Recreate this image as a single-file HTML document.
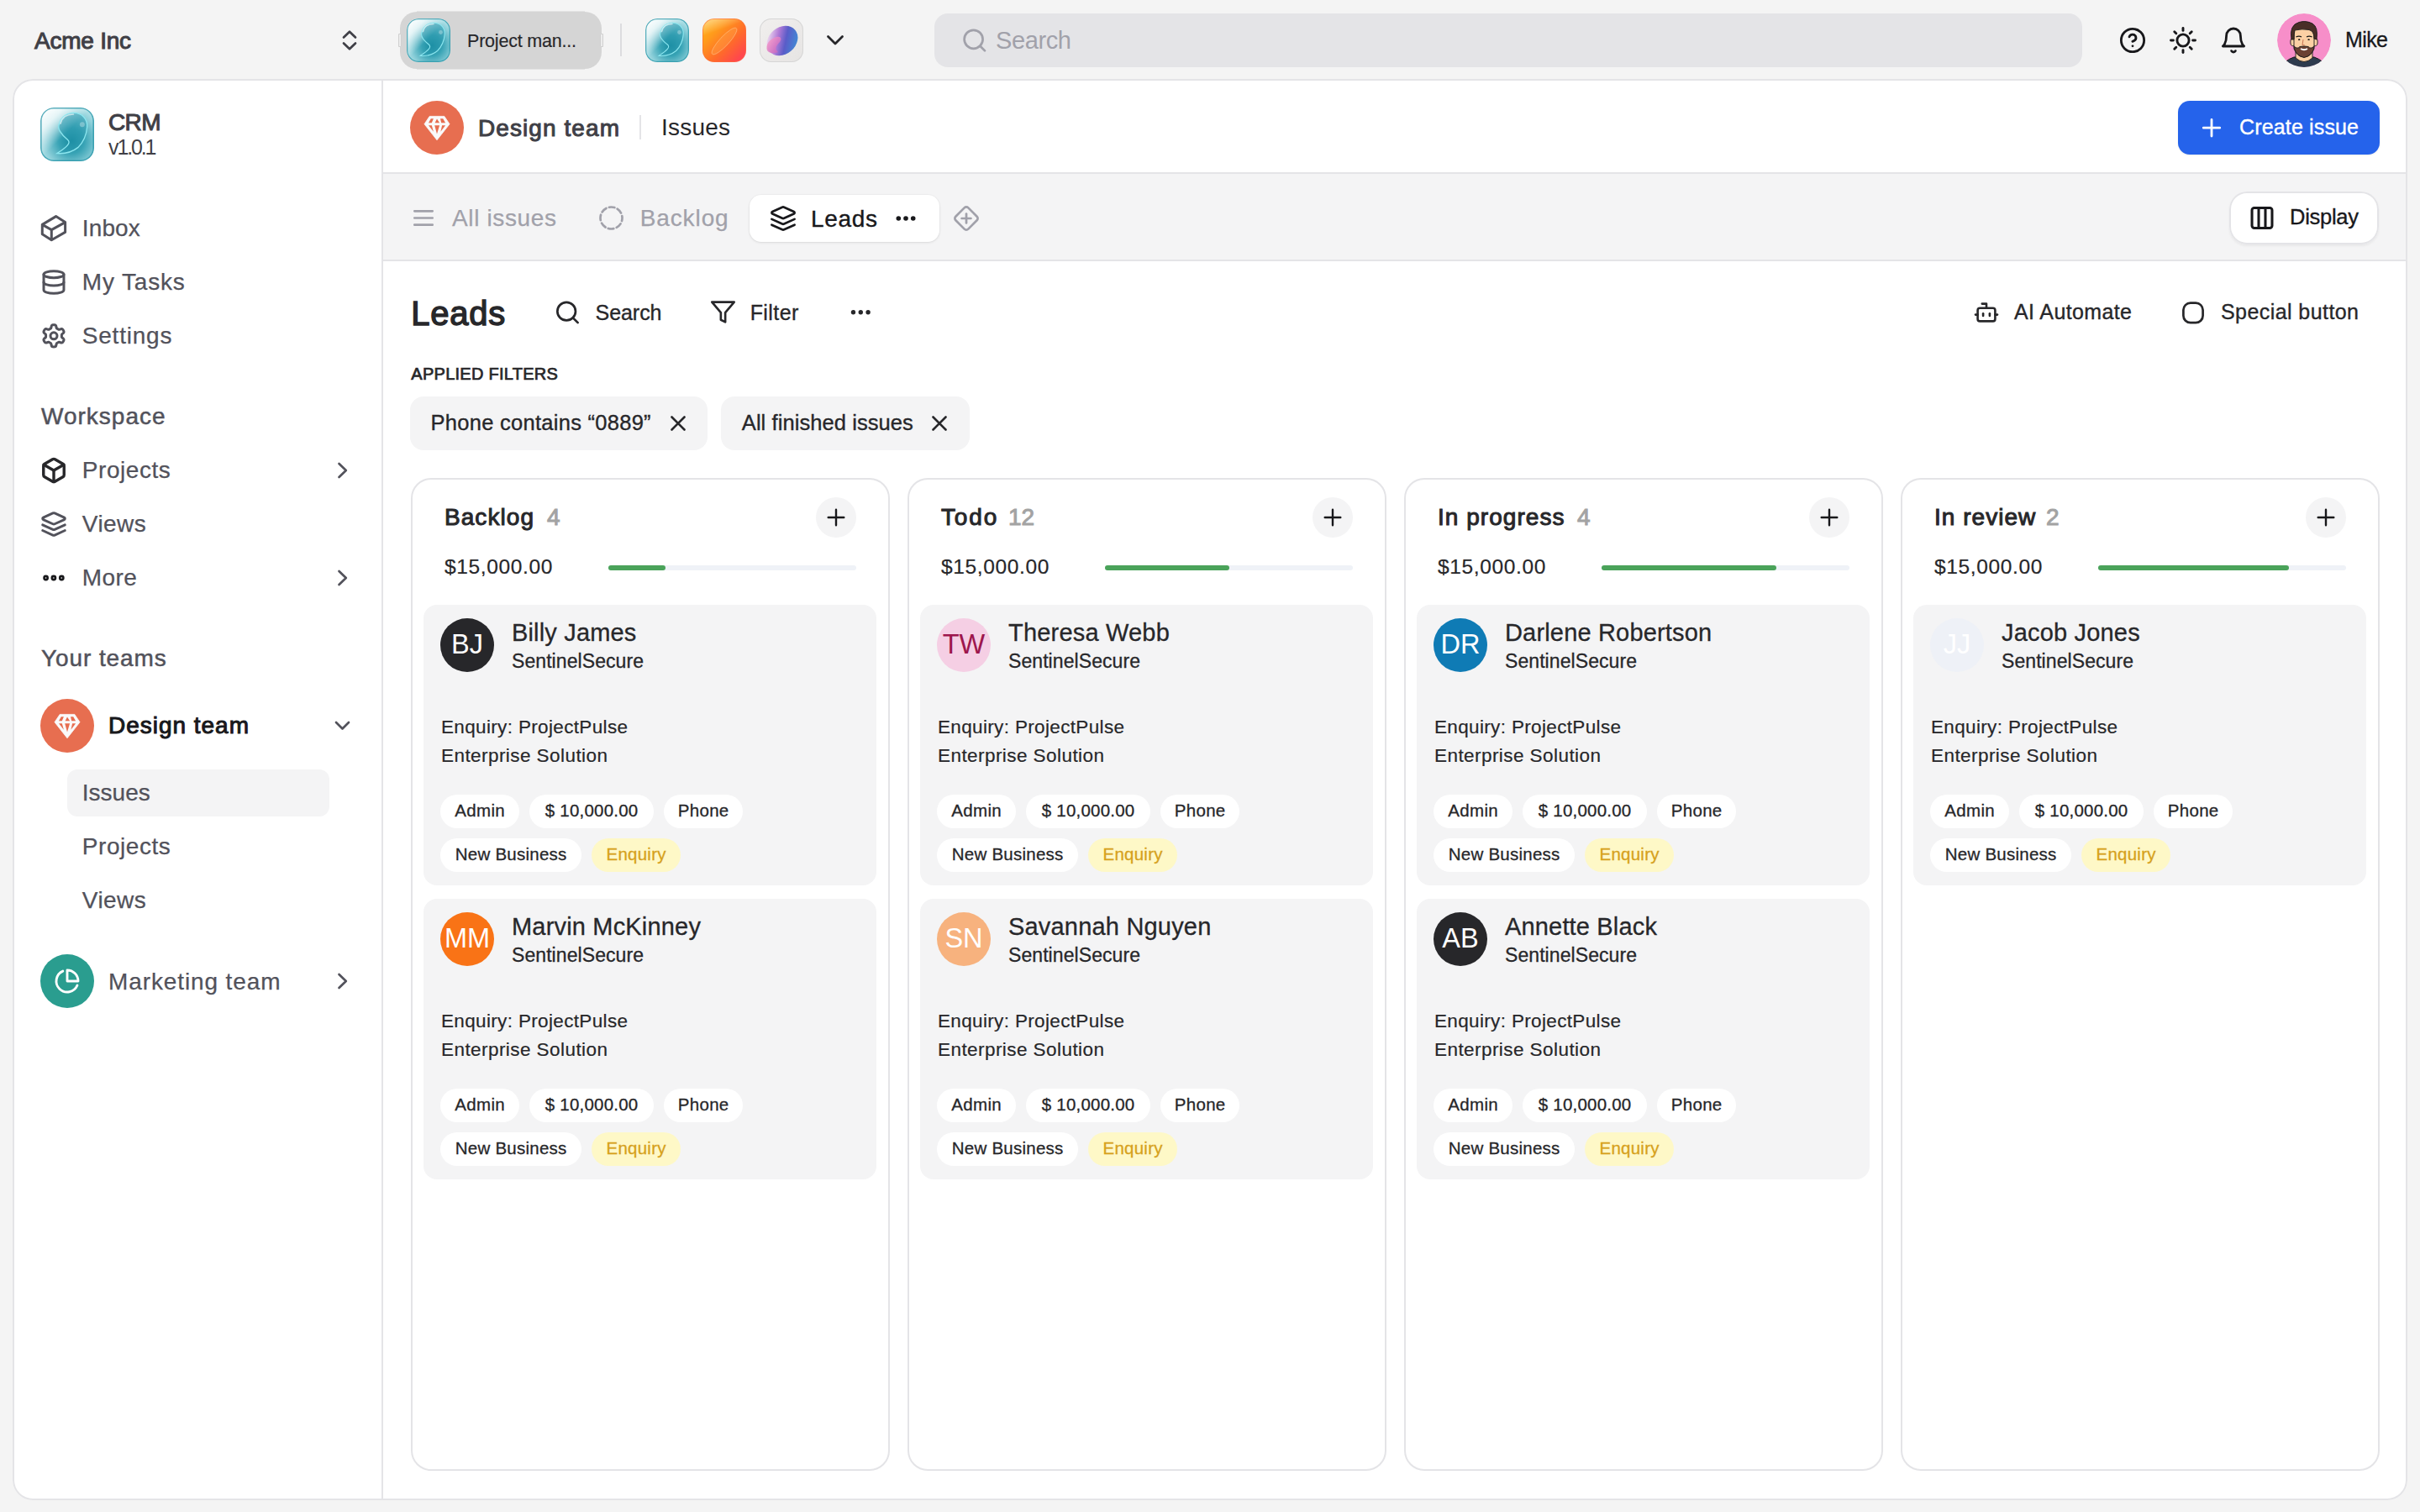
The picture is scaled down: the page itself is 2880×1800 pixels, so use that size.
<!DOCTYPE html>
<html><head><meta charset="utf-8"><title>Leads</title>
<style>
html,body{margin:0;padding:0;}
body{width:2880px;height:1800px;overflow:hidden;position:relative;background:#f4f4f4;font-family:"Liberation Sans", sans-serif;}
.a{position:absolute;box-sizing:border-box;}
.t{position:absolute;white-space:nowrap;font-family:"Liberation Sans", sans-serif;}
svg.ov{position:absolute;left:0;top:0;}
</style></head><body>
<div class="a" style="left:496px;top:13px;width:200px;height:70px;background:#e3e3e3;"></div>
<div class="a" style="left:476px;top:14px;width:240px;height:68px;background:#d5d5d5;border-radius:20px;"></div>
<div class="a" style="left:474px;top:40px;width:4px;height:16px;background:#ececec;border-radius:1px;box-shadow:inset 0 0 0 1px #d0d0d0;"></div>
<div class="a" style="left:714px;top:40px;width:4px;height:16px;background:#ececec;border-radius:1px;box-shadow:inset 0 0 0 1px #d0d0d0;"></div>
<div class="a" style="left:484px;top:22px;width:52px;height:52px;border-radius:14px;background:linear-gradient(135deg, rgba(255,255,255,0.95) 0%, rgba(255,255,255,0.75) 22%, rgba(255,255,255,0) 48%),radial-gradient(circle at 58% 62%, #168a9f 0%, #38a3b5 28%, #8ccfd9 58%, #c9ecf0 85%, #e6f7f9 100%);box-shadow:inset 0 0 0 1.3px rgba(40,150,168,0.75);"></div>
<div class="a" style="left:738px;top:28px;width:2px;height:39px;background:#dcdcdf;"></div>
<div class="a" style="left:768px;top:22px;width:52px;height:52px;border-radius:14px;background:linear-gradient(135deg, rgba(255,255,255,0.95) 0%, rgba(255,255,255,0.75) 22%, rgba(255,255,255,0) 48%),radial-gradient(circle at 58% 62%, #168a9f 0%, #38a3b5 28%, #8ccfd9 58%, #c9ecf0 85%, #e6f7f9 100%);box-shadow:inset 0 0 0 1.3px rgba(40,150,168,0.75);"></div>
<div class="a" style="left:836px;top:22px;width:52px;height:52px;border-radius:14px;background:linear-gradient(160deg, rgba(255,255,255,0.55) 0%, rgba(255,255,255,0) 30%),linear-gradient(135deg, #ffb915 0%, #ff9a1c 30%, #ff6b2a 60%, #ff4a4a 85%, #ff3d63 100%);box-shadow:inset 0 0 0 1px rgba(255,110,60,0.6);"></div>
<div class="a" style="left:904px;top:22px;width:52px;height:52px;border-radius:14px;background:linear-gradient(135deg,#f1efee 0%,#e6e4e3 100%);box-shadow:inset 0 0 0 1px #d6d6d6;"></div>
<div class="a" style="left:1112px;top:16px;width:1366px;height:64px;background:#e4e4e7;border-radius:16px;"></div>
<div class="a" style="left:15px;top:94px;width:2850px;height:1692px;background:#ffffff;border-radius:24px;box-shadow:inset 0 0 0 2px #e4e4e7;"></div>
<div class="a" style="left:454px;top:94px;width:2px;height:1692px;background:#e4e4e7;"></div>
<div class="a" style="left:48px;top:128px;width:64px;height:64px;border-radius:16px;background:linear-gradient(135deg, rgba(255,255,255,0.95) 0%, rgba(255,255,255,0.75) 22%, rgba(255,255,255,0) 48%),radial-gradient(circle at 58% 62%, #168a9f 0%, #38a3b5 28%, #8ccfd9 58%, #c9ecf0 85%, #e6f7f9 100%);box-shadow:inset 0 0 0 1.6px rgba(40,150,168,0.75);"></div>
<div class="a" style="left:48px;top:832px;width:64px;height:64px;background:#e76e50;border-radius:32px;"></div>
<div class="a" style="left:80px;top:916px;width:312px;height:56px;background:#f4f4f5;border-radius:12px;"></div>
<div class="a" style="left:48px;top:1136px;width:64px;height:64px;background:#2a9d8f;border-radius:32px;"></div>
<div class="a" style="left:488px;top:120px;width:64px;height:64px;background:#e76e50;border-radius:32px;"></div>
<div class="a" style="left:761px;top:137px;width:2px;height:29px;background:#e4e4e7;"></div>
<div class="a" style="left:2592px;top:120px;width:240px;height:64px;background:#2563eb;border-radius:14px;box-shadow:0 1px 2px rgba(0,0,0,0.08);"></div>
<div class="a" style="left:456px;top:205px;width:2407px;height:2px;background:#e4e4e7;"></div>
<div class="a" style="left:456px;top:207px;width:2407px;height:102px;background:#f4f4f5;"></div>
<div class="a" style="left:456px;top:309px;width:2407px;height:2px;background:#e4e4e7;"></div>
<div class="a" style="left:892px;top:232px;width:226px;height:56px;background:#ffffff;border-radius:14px;box-shadow:0 1px 3px rgba(0,0,0,0.10), 0 0 0 1px rgba(0,0,0,0.02);"></div>
<div class="a" style="left:2653px;top:228px;width:178px;height:63px;background:#ffffff;border-radius:21px;box-shadow:inset 0 0 0 2px #e4e4e7,0 2px 3px rgba(0,0,0,0.05);"></div>
<div class="a" style="left:488px;top:472px;width:354px;height:64px;background:#f4f4f5;border-radius:16px;"></div>
<div class="a" style="left:858px;top:472px;width:296px;height:64px;background:#f4f4f5;border-radius:16px;"></div>
<div class="a" style="left:489px;top:569px;width:570px;height:1182px;background:#ffffff;border-radius:24px;box-shadow:inset 0 0 0 2px #e4e4e7;"></div>
<div class="a" style="left:971px;top:592px;width:48px;height:48px;background:#f4f4f5;border-radius:24px;"></div>
<div class="a" style="left:724px;top:673px;width:295px;height:6px;background:#eff2f7;border-radius:3px;"></div>
<div class="a" style="left:724px;top:673px;width:68px;height:6px;background:#4aa35a;border-radius:3px;"></div>
<div class="a" style="left:504px;top:720px;width:539px;height:334px;background:#f4f4f5;border-radius:16px;"></div>
<div class="a" style="left:524px;top:736px;width:64px;height:64px;background:#27272a;border-radius:32px;"></div>
<div class="a" style="left:524px;top:946px;width:94px;height:40px;background:#ffffff;border-radius:20px;"></div>
<div class="a" style="left:630px;top:946px;width:148px;height:40px;background:#ffffff;border-radius:20px;"></div>
<div class="a" style="left:790px;top:946px;width:94px;height:40px;background:#ffffff;border-radius:20px;"></div>
<div class="a" style="left:524px;top:998px;width:168px;height:40px;background:#ffffff;border-radius:20px;"></div>
<div class="a" style="left:704px;top:998px;width:106px;height:40px;background:#fef8c7;border-radius:20px;"></div>
<div class="a" style="left:504px;top:1070px;width:539px;height:334px;background:#f4f4f5;border-radius:16px;"></div>
<div class="a" style="left:524px;top:1086px;width:64px;height:64px;background:#f97316;border-radius:32px;"></div>
<div class="a" style="left:524px;top:1296px;width:94px;height:40px;background:#ffffff;border-radius:20px;"></div>
<div class="a" style="left:630px;top:1296px;width:148px;height:40px;background:#ffffff;border-radius:20px;"></div>
<div class="a" style="left:790px;top:1296px;width:94px;height:40px;background:#ffffff;border-radius:20px;"></div>
<div class="a" style="left:524px;top:1348px;width:168px;height:40px;background:#ffffff;border-radius:20px;"></div>
<div class="a" style="left:704px;top:1348px;width:106px;height:40px;background:#fef8c7;border-radius:20px;"></div>
<div class="a" style="left:1080px;top:569px;width:570px;height:1182px;background:#ffffff;border-radius:24px;box-shadow:inset 0 0 0 2px #e4e4e7;"></div>
<div class="a" style="left:1562px;top:592px;width:48px;height:48px;background:#f4f4f5;border-radius:24px;"></div>
<div class="a" style="left:1315px;top:673px;width:295px;height:6px;background:#eff2f7;border-radius:3px;"></div>
<div class="a" style="left:1315px;top:673px;width:148px;height:6px;background:#4aa35a;border-radius:3px;"></div>
<div class="a" style="left:1095px;top:720px;width:539px;height:334px;background:#f4f4f5;border-radius:16px;"></div>
<div class="a" style="left:1115px;top:736px;width:64px;height:64px;background:#f5cfe4;border-radius:32px;"></div>
<div class="a" style="left:1115px;top:946px;width:94px;height:40px;background:#ffffff;border-radius:20px;"></div>
<div class="a" style="left:1221px;top:946px;width:148px;height:40px;background:#ffffff;border-radius:20px;"></div>
<div class="a" style="left:1381px;top:946px;width:94px;height:40px;background:#ffffff;border-radius:20px;"></div>
<div class="a" style="left:1115px;top:998px;width:168px;height:40px;background:#ffffff;border-radius:20px;"></div>
<div class="a" style="left:1295px;top:998px;width:106px;height:40px;background:#fef8c7;border-radius:20px;"></div>
<div class="a" style="left:1095px;top:1070px;width:539px;height:334px;background:#f4f4f5;border-radius:16px;"></div>
<div class="a" style="left:1115px;top:1086px;width:64px;height:64px;background:#f7b27e;border-radius:32px;"></div>
<div class="a" style="left:1115px;top:1296px;width:94px;height:40px;background:#ffffff;border-radius:20px;"></div>
<div class="a" style="left:1221px;top:1296px;width:148px;height:40px;background:#ffffff;border-radius:20px;"></div>
<div class="a" style="left:1381px;top:1296px;width:94px;height:40px;background:#ffffff;border-radius:20px;"></div>
<div class="a" style="left:1115px;top:1348px;width:168px;height:40px;background:#ffffff;border-radius:20px;"></div>
<div class="a" style="left:1295px;top:1348px;width:106px;height:40px;background:#fef8c7;border-radius:20px;"></div>
<div class="a" style="left:1671px;top:569px;width:570px;height:1182px;background:#ffffff;border-radius:24px;box-shadow:inset 0 0 0 2px #e4e4e7;"></div>
<div class="a" style="left:2153px;top:592px;width:48px;height:48px;background:#f4f4f5;border-radius:24px;"></div>
<div class="a" style="left:1906px;top:673px;width:295px;height:6px;background:#eff2f7;border-radius:3px;"></div>
<div class="a" style="left:1906px;top:673px;width:208px;height:6px;background:#4aa35a;border-radius:3px;"></div>
<div class="a" style="left:1686px;top:720px;width:539px;height:334px;background:#f4f4f5;border-radius:16px;"></div>
<div class="a" style="left:1706px;top:736px;width:64px;height:64px;background:#0f7bb5;border-radius:32px;"></div>
<div class="a" style="left:1706px;top:946px;width:94px;height:40px;background:#ffffff;border-radius:20px;"></div>
<div class="a" style="left:1812px;top:946px;width:148px;height:40px;background:#ffffff;border-radius:20px;"></div>
<div class="a" style="left:1972px;top:946px;width:94px;height:40px;background:#ffffff;border-radius:20px;"></div>
<div class="a" style="left:1706px;top:998px;width:168px;height:40px;background:#ffffff;border-radius:20px;"></div>
<div class="a" style="left:1886px;top:998px;width:106px;height:40px;background:#fef8c7;border-radius:20px;"></div>
<div class="a" style="left:1686px;top:1070px;width:539px;height:334px;background:#f4f4f5;border-radius:16px;"></div>
<div class="a" style="left:1706px;top:1086px;width:64px;height:64px;background:#27272a;border-radius:32px;"></div>
<div class="a" style="left:1706px;top:1296px;width:94px;height:40px;background:#ffffff;border-radius:20px;"></div>
<div class="a" style="left:1812px;top:1296px;width:148px;height:40px;background:#ffffff;border-radius:20px;"></div>
<div class="a" style="left:1972px;top:1296px;width:94px;height:40px;background:#ffffff;border-radius:20px;"></div>
<div class="a" style="left:1706px;top:1348px;width:168px;height:40px;background:#ffffff;border-radius:20px;"></div>
<div class="a" style="left:1886px;top:1348px;width:106px;height:40px;background:#fef8c7;border-radius:20px;"></div>
<div class="a" style="left:2262px;top:569px;width:570px;height:1182px;background:#ffffff;border-radius:24px;box-shadow:inset 0 0 0 2px #e4e4e7;"></div>
<div class="a" style="left:2744px;top:592px;width:48px;height:48px;background:#f4f4f5;border-radius:24px;"></div>
<div class="a" style="left:2497px;top:673px;width:295px;height:6px;background:#eff2f7;border-radius:3px;"></div>
<div class="a" style="left:2497px;top:673px;width:227px;height:6px;background:#4aa35a;border-radius:3px;"></div>
<div class="a" style="left:2277px;top:720px;width:539px;height:334px;background:#f4f4f5;border-radius:16px;"></div>
<div class="a" style="left:2297px;top:736px;width:64px;height:64px;background:#eef1f7;border-radius:32px;"></div>
<div class="a" style="left:2297px;top:946px;width:94px;height:40px;background:#ffffff;border-radius:20px;"></div>
<div class="a" style="left:2403px;top:946px;width:148px;height:40px;background:#ffffff;border-radius:20px;"></div>
<div class="a" style="left:2563px;top:946px;width:94px;height:40px;background:#ffffff;border-radius:20px;"></div>
<div class="a" style="left:2297px;top:998px;width:168px;height:40px;background:#ffffff;border-radius:20px;"></div>
<div class="a" style="left:2477px;top:998px;width:106px;height:40px;background:#fef8c7;border-radius:20px;"></div>
<span class="t" style="left:41.00px;top:34.80px;font-size:28px;line-height:28px;color:#3f3f46;letter-spacing:-0.243px;-webkit-text-stroke:1.01px #3f3f46;">Acme Inc</span>
<span class="t" style="left:556.00px;top:38.60px;font-size:21.5px;line-height:21.5px;color:#27272a;letter-spacing:-0.203px;-webkit-text-stroke:0.15px #27272a;">Project man...</span>
<span class="t" style="left:1185.00px;top:34.15px;font-size:29px;line-height:29px;color:#a1a1aa;letter-spacing:-0.378px;">Search</span>
<span class="t" style="left:2791.00px;top:35.24px;font-size:25px;line-height:25px;color:#18181b;letter-spacing:-0.599px;-webkit-text-stroke:0.3px #18181b;">Mike</span>
<span class="t" style="left:129.00px;top:132.10px;font-size:28px;line-height:28px;color:#3f3f46;letter-spacing:-0.633px;-webkit-text-stroke:1.01px #3f3f46;">CRM</span>
<span class="t" style="left:129.00px;top:162.84px;font-size:25px;line-height:25px;color:#3f3f46;letter-spacing:-2.122px;">v1.0.1</span>
<span class="t" style="left:97.80px;top:258.30px;font-size:28px;line-height:28px;color:#52525b;letter-spacing:0.125px;-webkit-text-stroke:0.25px #52525b;">Inbox</span>
<span class="t" style="left:97.80px;top:322.30px;font-size:28px;line-height:28px;color:#52525b;letter-spacing:0.833px;-webkit-text-stroke:0.25px #52525b;">My Tasks</span>
<span class="t" style="left:97.80px;top:386.30px;font-size:28px;line-height:28px;color:#52525b;letter-spacing:0.775px;-webkit-text-stroke:0.25px #52525b;">Settings</span>
<span class="t" style="left:49.00px;top:481.80px;font-size:28px;line-height:28px;color:#52525b;letter-spacing:1.007px;-webkit-text-stroke:0.5px #52525b;">Workspace</span>
<span class="t" style="left:97.80px;top:546.30px;font-size:28px;line-height:28px;color:#52525b;letter-spacing:0.549px;-webkit-text-stroke:0.25px #52525b;">Projects</span>
<span class="t" style="left:97.80px;top:610.30px;font-size:28px;line-height:28px;color:#52525b;letter-spacing:0.453px;-webkit-text-stroke:0.25px #52525b;">Views</span>
<span class="t" style="left:97.80px;top:674.10px;font-size:28px;line-height:28px;color:#52525b;letter-spacing:0.401px;-webkit-text-stroke:0.25px #52525b;">More</span>
<span class="t" style="left:49.00px;top:770.10px;font-size:28px;line-height:28px;color:#52525b;letter-spacing:0.910px;-webkit-text-stroke:0.5px #52525b;">Your teams</span>
<span class="t" style="left:129.00px;top:849.90px;font-size:28px;line-height:28px;color:#18181b;letter-spacing:0.981px;-webkit-text-stroke:1.01px #18181b;">Design team</span>
<span class="t" style="left:97.80px;top:929.90px;font-size:28px;line-height:28px;color:#52525b;letter-spacing:0.013px;-webkit-text-stroke:0.25px #52525b;">Issues</span>
<span class="t" style="left:97.80px;top:994.30px;font-size:28px;line-height:28px;color:#52525b;letter-spacing:0.549px;-webkit-text-stroke:0.25px #52525b;">Projects</span>
<span class="t" style="left:97.80px;top:1057.90px;font-size:28px;line-height:28px;color:#52525b;letter-spacing:0.453px;-webkit-text-stroke:0.25px #52525b;">Views</span>
<span class="t" style="left:129.00px;top:1155.30px;font-size:28px;line-height:28px;color:#52525b;letter-spacing:0.887px;-webkit-text-stroke:0.25px #52525b;">Marketing team</span>
<span class="t" style="left:569.00px;top:138.50px;font-size:28px;line-height:28px;color:#3f3f46;letter-spacing:1.081px;-webkit-text-stroke:1.01px #3f3f46;">Design team</span>
<span class="t" style="left:787.00px;top:138.30px;font-size:28px;line-height:28px;color:#27272a;letter-spacing:0.212px;">Issues</span>
<span class="t" style="left:2665.00px;top:138.54px;font-size:25px;line-height:25px;color:#ffffff;letter-spacing:0.149px;-webkit-text-stroke:0.35px #ffffff;">Create issue</span>
<span class="t" style="left:538.00px;top:246.30px;font-size:28px;line-height:28px;color:#a1a1aa;letter-spacing:0.637px;-webkit-text-stroke:0.25px #a1a1aa;">All issues</span>
<span class="t" style="left:761.70px;top:246.30px;font-size:28px;line-height:28px;color:#a1a1aa;letter-spacing:0.896px;-webkit-text-stroke:0.25px #a1a1aa;">Backlog</span>
<span class="t" style="left:965.00px;top:246.50px;font-size:28px;line-height:28px;color:#18181b;letter-spacing:0.676px;-webkit-text-stroke:0.35px #18181b;">Leads</span>
<span class="t" style="left:2725.00px;top:246.41px;font-size:25.5px;line-height:25.5px;color:#18181b;letter-spacing:-0.271px;-webkit-text-stroke:0.35px #18181b;">Display</span>
<span class="t" style="left:489.30px;top:352.64px;font-size:40px;line-height:40px;color:#27272a;letter-spacing:0.754px;-webkit-text-stroke:1.44px #27272a;">Leads</span>
<span class="t" style="left:708.50px;top:359.64px;font-size:25px;line-height:25px;color:#27272a;letter-spacing:-0.044px;-webkit-text-stroke:0.35px #27272a;">Search</span>
<span class="t" style="left:892.70px;top:359.64px;font-size:25px;line-height:25px;color:#27272a;letter-spacing:0.408px;-webkit-text-stroke:0.35px #27272a;">Filter</span>
<span class="t" style="left:2397.00px;top:358.64px;font-size:25px;line-height:25px;color:#27272a;letter-spacing:0.380px;-webkit-text-stroke:0.35px #27272a;">AI Automate</span>
<span class="t" style="left:2643.00px;top:358.64px;font-size:25px;line-height:25px;color:#27272a;letter-spacing:0.427px;-webkit-text-stroke:0.35px #27272a;">Special button</span>
<span class="t" style="left:489.30px;top:435.27px;font-size:20px;line-height:20px;color:#27272a;letter-spacing:0.272px;-webkit-text-stroke:0.72px #27272a;">APPLIED FILTERS</span>
<span class="t" style="left:512.60px;top:491.11px;font-size:25.5px;line-height:25.5px;color:#27272a;letter-spacing:0.270px;-webkit-text-stroke:0.35px #27272a;">Phone contains “0889”</span>
<span class="t" style="left:882.80px;top:490.61px;font-size:25.5px;line-height:25.5px;color:#27272a;letter-spacing:0.073px;-webkit-text-stroke:0.35px #27272a;">All finished issues</span>
<span class="t" style="left:529.00px;top:602.40px;font-size:28px;line-height:28px;color:#27272a;letter-spacing:1.062px;-webkit-text-stroke:1.01px #27272a;">Backlog</span>
<span class="t" style="left:651.00px;top:602.40px;font-size:28px;line-height:28px;color:#a3a3a3;-webkit-text-stroke:1.01px #a3a3a3;">4</span>
<span class="t" style="left:529.00px;top:663.26px;font-size:24.5px;line-height:24.5px;color:#27272a;letter-spacing:0.631px;-webkit-text-stroke:0.2px #27272a;">$15,000.00</span>
<span class="t" style="left:537.03px;top:751.49px;font-size:32.5px;line-height:32.5px;color:#ffffff;">BJ</span>
<span class="t" style="left:609.00px;top:738.75px;font-size:29px;line-height:29px;color:#27272a;letter-spacing:0.164px;-webkit-text-stroke:0.3px #27272a;">Billy James</span>
<span class="t" style="left:609.00px;top:775.53px;font-size:23px;line-height:23px;color:#27272a;letter-spacing:0.077px;-webkit-text-stroke:0.3px #27272a;">SentinelSecure</span>
<span class="t" style="left:525.00px;top:854.95px;font-size:22.5px;line-height:22.5px;color:#27272a;letter-spacing:0.345px;-webkit-text-stroke:0.2px #27272a;">Enquiry: ProjectPulse</span>
<span class="t" style="left:525.00px;top:888.95px;font-size:22.5px;line-height:22.5px;color:#27272a;letter-spacing:0.438px;-webkit-text-stroke:0.2px #27272a;">Enterprise Solution</span>
<span class="t" style="left:541.35px;top:954.85px;font-size:20.5px;line-height:20.5px;color:#27272a;letter-spacing:0.298px;-webkit-text-stroke:0.3px #27272a;">Admin</span>
<span class="t" style="left:648.74px;top:954.85px;font-size:20.5px;line-height:20.5px;color:#27272a;letter-spacing:0.222px;-webkit-text-stroke:0.3px #27272a;">$ 10,000.00</span>
<span class="t" style="left:806.75px;top:954.85px;font-size:20.5px;line-height:20.5px;color:#27272a;letter-spacing:0.304px;-webkit-text-stroke:0.3px #27272a;">Phone</span>
<span class="t" style="left:541.72px;top:1006.85px;font-size:20.5px;line-height:20.5px;color:#27272a;letter-spacing:0.242px;-webkit-text-stroke:0.3px #27272a;">New Business</span>
<span class="t" style="left:721.53px;top:1006.85px;font-size:20.5px;line-height:20.5px;color:#d6a11c;letter-spacing:0.237px;-webkit-text-stroke:0.3px #d6a11c;">Enquiry</span>
<span class="t" style="left:528.92px;top:1101.49px;font-size:32.5px;line-height:32.5px;color:#ffffff;">MM</span>
<span class="t" style="left:609.00px;top:1088.75px;font-size:29px;line-height:29px;color:#27272a;letter-spacing:0.178px;-webkit-text-stroke:0.3px #27272a;">Marvin McKinney</span>
<span class="t" style="left:609.00px;top:1125.53px;font-size:23px;line-height:23px;color:#27272a;letter-spacing:0.077px;-webkit-text-stroke:0.3px #27272a;">SentinelSecure</span>
<span class="t" style="left:525.00px;top:1204.95px;font-size:22.5px;line-height:22.5px;color:#27272a;letter-spacing:0.345px;-webkit-text-stroke:0.2px #27272a;">Enquiry: ProjectPulse</span>
<span class="t" style="left:525.00px;top:1238.95px;font-size:22.5px;line-height:22.5px;color:#27272a;letter-spacing:0.438px;-webkit-text-stroke:0.2px #27272a;">Enterprise Solution</span>
<span class="t" style="left:541.35px;top:1304.85px;font-size:20.5px;line-height:20.5px;color:#27272a;letter-spacing:0.298px;-webkit-text-stroke:0.3px #27272a;">Admin</span>
<span class="t" style="left:648.74px;top:1304.85px;font-size:20.5px;line-height:20.5px;color:#27272a;letter-spacing:0.222px;-webkit-text-stroke:0.3px #27272a;">$ 10,000.00</span>
<span class="t" style="left:806.75px;top:1304.85px;font-size:20.5px;line-height:20.5px;color:#27272a;letter-spacing:0.304px;-webkit-text-stroke:0.3px #27272a;">Phone</span>
<span class="t" style="left:541.72px;top:1356.85px;font-size:20.5px;line-height:20.5px;color:#27272a;letter-spacing:0.242px;-webkit-text-stroke:0.3px #27272a;">New Business</span>
<span class="t" style="left:721.53px;top:1356.85px;font-size:20.5px;line-height:20.5px;color:#d6a11c;letter-spacing:0.237px;-webkit-text-stroke:0.3px #d6a11c;">Enquiry</span>
<span class="t" style="left:1120.00px;top:602.40px;font-size:28px;line-height:28px;color:#27272a;letter-spacing:1.827px;-webkit-text-stroke:1.01px #27272a;">Todo</span>
<span class="t" style="left:1200.00px;top:602.40px;font-size:28px;line-height:28px;color:#a3a3a3;-webkit-text-stroke:1.01px #a3a3a3;">12</span>
<span class="t" style="left:1120.00px;top:663.26px;font-size:24.5px;line-height:24.5px;color:#27272a;letter-spacing:0.631px;-webkit-text-stroke:0.2px #27272a;">$15,000.00</span>
<span class="t" style="left:1121.73px;top:751.49px;font-size:32.5px;line-height:32.5px;color:#9d174d;">TW</span>
<span class="t" style="left:1200.00px;top:738.75px;font-size:29px;line-height:29px;color:#27272a;letter-spacing:0.193px;-webkit-text-stroke:0.3px #27272a;">Theresa Webb</span>
<span class="t" style="left:1200.00px;top:775.53px;font-size:23px;line-height:23px;color:#27272a;letter-spacing:0.077px;-webkit-text-stroke:0.3px #27272a;">SentinelSecure</span>
<span class="t" style="left:1116.00px;top:854.95px;font-size:22.5px;line-height:22.5px;color:#27272a;letter-spacing:0.345px;-webkit-text-stroke:0.2px #27272a;">Enquiry: ProjectPulse</span>
<span class="t" style="left:1116.00px;top:888.95px;font-size:22.5px;line-height:22.5px;color:#27272a;letter-spacing:0.438px;-webkit-text-stroke:0.2px #27272a;">Enterprise Solution</span>
<span class="t" style="left:1132.35px;top:954.85px;font-size:20.5px;line-height:20.5px;color:#27272a;letter-spacing:0.298px;-webkit-text-stroke:0.3px #27272a;">Admin</span>
<span class="t" style="left:1239.74px;top:954.85px;font-size:20.5px;line-height:20.5px;color:#27272a;letter-spacing:0.222px;-webkit-text-stroke:0.3px #27272a;">$ 10,000.00</span>
<span class="t" style="left:1397.75px;top:954.85px;font-size:20.5px;line-height:20.5px;color:#27272a;letter-spacing:0.304px;-webkit-text-stroke:0.3px #27272a;">Phone</span>
<span class="t" style="left:1132.72px;top:1006.85px;font-size:20.5px;line-height:20.5px;color:#27272a;letter-spacing:0.242px;-webkit-text-stroke:0.3px #27272a;">New Business</span>
<span class="t" style="left:1312.53px;top:1006.85px;font-size:20.5px;line-height:20.5px;color:#d6a11c;letter-spacing:0.237px;-webkit-text-stroke:0.3px #d6a11c;">Enquiry</span>
<span class="t" style="left:1124.42px;top:1101.49px;font-size:32.5px;line-height:32.5px;color:#ffffff;">SN</span>
<span class="t" style="left:1200.00px;top:1088.75px;font-size:29px;line-height:29px;color:#27272a;letter-spacing:0.191px;-webkit-text-stroke:0.3px #27272a;">Savannah Nguyen</span>
<span class="t" style="left:1200.00px;top:1125.53px;font-size:23px;line-height:23px;color:#27272a;letter-spacing:0.077px;-webkit-text-stroke:0.3px #27272a;">SentinelSecure</span>
<span class="t" style="left:1116.00px;top:1204.95px;font-size:22.5px;line-height:22.5px;color:#27272a;letter-spacing:0.345px;-webkit-text-stroke:0.2px #27272a;">Enquiry: ProjectPulse</span>
<span class="t" style="left:1116.00px;top:1238.95px;font-size:22.5px;line-height:22.5px;color:#27272a;letter-spacing:0.438px;-webkit-text-stroke:0.2px #27272a;">Enterprise Solution</span>
<span class="t" style="left:1132.35px;top:1304.85px;font-size:20.5px;line-height:20.5px;color:#27272a;letter-spacing:0.298px;-webkit-text-stroke:0.3px #27272a;">Admin</span>
<span class="t" style="left:1239.74px;top:1304.85px;font-size:20.5px;line-height:20.5px;color:#27272a;letter-spacing:0.222px;-webkit-text-stroke:0.3px #27272a;">$ 10,000.00</span>
<span class="t" style="left:1397.75px;top:1304.85px;font-size:20.5px;line-height:20.5px;color:#27272a;letter-spacing:0.304px;-webkit-text-stroke:0.3px #27272a;">Phone</span>
<span class="t" style="left:1132.72px;top:1356.85px;font-size:20.5px;line-height:20.5px;color:#27272a;letter-spacing:0.242px;-webkit-text-stroke:0.3px #27272a;">New Business</span>
<span class="t" style="left:1312.53px;top:1356.85px;font-size:20.5px;line-height:20.5px;color:#d6a11c;letter-spacing:0.237px;-webkit-text-stroke:0.3px #d6a11c;">Enquiry</span>
<span class="t" style="left:1711.00px;top:602.40px;font-size:28px;line-height:28px;color:#27272a;letter-spacing:1.042px;-webkit-text-stroke:1.01px #27272a;">In progress</span>
<span class="t" style="left:1877.00px;top:602.40px;font-size:28px;line-height:28px;color:#a3a3a3;-webkit-text-stroke:1.01px #a3a3a3;">4</span>
<span class="t" style="left:1711.00px;top:663.26px;font-size:24.5px;line-height:24.5px;color:#27272a;letter-spacing:0.631px;-webkit-text-stroke:0.2px #27272a;">$15,000.00</span>
<span class="t" style="left:1714.52px;top:751.49px;font-size:32.5px;line-height:32.5px;color:#ffffff;">DR</span>
<span class="t" style="left:1791.00px;top:738.75px;font-size:29px;line-height:29px;color:#27272a;letter-spacing:0.171px;-webkit-text-stroke:0.3px #27272a;">Darlene Robertson</span>
<span class="t" style="left:1791.00px;top:775.53px;font-size:23px;line-height:23px;color:#27272a;letter-spacing:0.077px;-webkit-text-stroke:0.3px #27272a;">SentinelSecure</span>
<span class="t" style="left:1707.00px;top:854.95px;font-size:22.5px;line-height:22.5px;color:#27272a;letter-spacing:0.345px;-webkit-text-stroke:0.2px #27272a;">Enquiry: ProjectPulse</span>
<span class="t" style="left:1707.00px;top:888.95px;font-size:22.5px;line-height:22.5px;color:#27272a;letter-spacing:0.438px;-webkit-text-stroke:0.2px #27272a;">Enterprise Solution</span>
<span class="t" style="left:1723.35px;top:954.85px;font-size:20.5px;line-height:20.5px;color:#27272a;letter-spacing:0.298px;-webkit-text-stroke:0.3px #27272a;">Admin</span>
<span class="t" style="left:1830.74px;top:954.85px;font-size:20.5px;line-height:20.5px;color:#27272a;letter-spacing:0.222px;-webkit-text-stroke:0.3px #27272a;">$ 10,000.00</span>
<span class="t" style="left:1988.75px;top:954.85px;font-size:20.5px;line-height:20.5px;color:#27272a;letter-spacing:0.304px;-webkit-text-stroke:0.3px #27272a;">Phone</span>
<span class="t" style="left:1723.72px;top:1006.85px;font-size:20.5px;line-height:20.5px;color:#27272a;letter-spacing:0.242px;-webkit-text-stroke:0.3px #27272a;">New Business</span>
<span class="t" style="left:1903.53px;top:1006.85px;font-size:20.5px;line-height:20.5px;color:#d6a11c;letter-spacing:0.237px;-webkit-text-stroke:0.3px #d6a11c;">Enquiry</span>
<span class="t" style="left:1716.32px;top:1101.49px;font-size:32.5px;line-height:32.5px;color:#ffffff;">AB</span>
<span class="t" style="left:1791.00px;top:1088.75px;font-size:29px;line-height:29px;color:#27272a;letter-spacing:0.167px;-webkit-text-stroke:0.3px #27272a;">Annette Black</span>
<span class="t" style="left:1791.00px;top:1125.53px;font-size:23px;line-height:23px;color:#27272a;letter-spacing:0.077px;-webkit-text-stroke:0.3px #27272a;">SentinelSecure</span>
<span class="t" style="left:1707.00px;top:1204.95px;font-size:22.5px;line-height:22.5px;color:#27272a;letter-spacing:0.345px;-webkit-text-stroke:0.2px #27272a;">Enquiry: ProjectPulse</span>
<span class="t" style="left:1707.00px;top:1238.95px;font-size:22.5px;line-height:22.5px;color:#27272a;letter-spacing:0.438px;-webkit-text-stroke:0.2px #27272a;">Enterprise Solution</span>
<span class="t" style="left:1723.35px;top:1304.85px;font-size:20.5px;line-height:20.5px;color:#27272a;letter-spacing:0.298px;-webkit-text-stroke:0.3px #27272a;">Admin</span>
<span class="t" style="left:1830.74px;top:1304.85px;font-size:20.5px;line-height:20.5px;color:#27272a;letter-spacing:0.222px;-webkit-text-stroke:0.3px #27272a;">$ 10,000.00</span>
<span class="t" style="left:1988.75px;top:1304.85px;font-size:20.5px;line-height:20.5px;color:#27272a;letter-spacing:0.304px;-webkit-text-stroke:0.3px #27272a;">Phone</span>
<span class="t" style="left:1723.72px;top:1356.85px;font-size:20.5px;line-height:20.5px;color:#27272a;letter-spacing:0.242px;-webkit-text-stroke:0.3px #27272a;">New Business</span>
<span class="t" style="left:1903.53px;top:1356.85px;font-size:20.5px;line-height:20.5px;color:#d6a11c;letter-spacing:0.237px;-webkit-text-stroke:0.3px #d6a11c;">Enquiry</span>
<span class="t" style="left:2302.00px;top:602.40px;font-size:28px;line-height:28px;color:#27272a;letter-spacing:1.032px;-webkit-text-stroke:1.01px #27272a;">In review</span>
<span class="t" style="left:2435.00px;top:602.40px;font-size:28px;line-height:28px;color:#a3a3a3;-webkit-text-stroke:1.01px #a3a3a3;">2</span>
<span class="t" style="left:2302.00px;top:663.26px;font-size:24.5px;line-height:24.5px;color:#27272a;letter-spacing:0.631px;-webkit-text-stroke:0.2px #27272a;">$15,000.00</span>
<span class="t" style="left:2312.75px;top:751.49px;font-size:32.5px;line-height:32.5px;color:#ffffff;">JJ</span>
<span class="t" style="left:2382.00px;top:738.75px;font-size:29px;line-height:29px;color:#27272a;letter-spacing:0.183px;-webkit-text-stroke:0.3px #27272a;">Jacob Jones</span>
<span class="t" style="left:2382.00px;top:775.53px;font-size:23px;line-height:23px;color:#27272a;letter-spacing:0.077px;-webkit-text-stroke:0.3px #27272a;">SentinelSecure</span>
<span class="t" style="left:2298.00px;top:854.95px;font-size:22.5px;line-height:22.5px;color:#27272a;letter-spacing:0.345px;-webkit-text-stroke:0.2px #27272a;">Enquiry: ProjectPulse</span>
<span class="t" style="left:2298.00px;top:888.95px;font-size:22.5px;line-height:22.5px;color:#27272a;letter-spacing:0.438px;-webkit-text-stroke:0.2px #27272a;">Enterprise Solution</span>
<span class="t" style="left:2314.35px;top:954.85px;font-size:20.5px;line-height:20.5px;color:#27272a;letter-spacing:0.298px;-webkit-text-stroke:0.3px #27272a;">Admin</span>
<span class="t" style="left:2421.74px;top:954.85px;font-size:20.5px;line-height:20.5px;color:#27272a;letter-spacing:0.222px;-webkit-text-stroke:0.3px #27272a;">$ 10,000.00</span>
<span class="t" style="left:2579.75px;top:954.85px;font-size:20.5px;line-height:20.5px;color:#27272a;letter-spacing:0.304px;-webkit-text-stroke:0.3px #27272a;">Phone</span>
<span class="t" style="left:2314.72px;top:1006.85px;font-size:20.5px;line-height:20.5px;color:#27272a;letter-spacing:0.242px;-webkit-text-stroke:0.3px #27272a;">New Business</span>
<span class="t" style="left:2494.53px;top:1006.85px;font-size:20.5px;line-height:20.5px;color:#d6a11c;letter-spacing:0.237px;-webkit-text-stroke:0.3px #d6a11c;">Enquiry</span>
<svg class="ov" width="2880" height="1800" viewBox="0 0 2880 1800">
<path d="M409 44.5 L416 37.7 L423 44.5 M409 51.5 L416 58.3 L423 51.5" stroke="#3f3f46" stroke-width="2.7" fill="none" stroke-linecap="round" stroke-linejoin="round"/>
<g transform="translate(484,22) scale(1.0)"><path d="M16.1 44.4 C26 38 30 34 26.3 31 C20 26 16 20 18.3 15.9 C20 9 26 5.2 32.3 5.2 C40 5.2 46 11 45.2 19.1 C44.5 28 40 35 36.6 38.5 C31 43 24 45 16.1 44.4 Z" fill="#2596ab" fill-opacity="0.5" stroke="#8be6ef" stroke-width="1.1"/><path d="M19.5 15.5 C21 9.5 26 6.5 32 6.5" stroke="#ffffff" stroke-opacity="0.6" stroke-width="1.4" fill="none" stroke-linecap="round"/><circle cx="40.5" cy="16.5" r="2.4" fill="#ffffff" fill-opacity="0.3"/></g>
<g transform="translate(768,22) scale(1.0)"><path d="M16.1 44.4 C26 38 30 34 26.3 31 C20 26 16 20 18.3 15.9 C20 9 26 5.2 32.3 5.2 C40 5.2 46 11 45.2 19.1 C44.5 28 40 35 36.6 38.5 C31 43 24 45 16.1 44.4 Z" fill="#2596ab" fill-opacity="0.5" stroke="#8be6ef" stroke-width="1.1"/><path d="M19.5 15.5 C21 9.5 26 6.5 32 6.5" stroke="#ffffff" stroke-opacity="0.6" stroke-width="1.4" fill="none" stroke-linecap="round"/><circle cx="40.5" cy="16.5" r="2.4" fill="#ffffff" fill-opacity="0.3"/></g>
<g transform="translate(836,22) scale(1.0)"><ellipse cx="26" cy="27" rx="21" ry="5.5" transform="rotate(-47 26 27)" fill="#ff9a40" fill-opacity="0.5" stroke="#ffd8a8" stroke-opacity="0.55" stroke-width="0.8"/></g>
<defs><linearGradient id="pg" x1="0.1" y1="0.1" x2="0.9" y2="0.9"><stop offset="0" stop-color="#f6e6f3"/><stop offset="0.35" stop-color="#b07ad6"/><stop offset="0.6" stop-color="#5a5cc8"/><stop offset="1" stop-color="#3f8fd6"/></linearGradient><linearGradient id="pg2" x1="0" y1="0" x2="1" y2="1"><stop offset="0" stop-color="#ffa0c8"/><stop offset="1" stop-color="#c060c0"/></linearGradient></defs><g transform="translate(904,22) scale(1.0)"><ellipse cx="27" cy="26.5" rx="20" ry="16" transform="rotate(-40 27 26.5)" fill="url(#pg)"/><path d="M8.5 36 C8 28 14 24 20 22 C25 20.5 27 24 24 28 C20 32 17 36 22 40 C18 42 9 42 8.5 36 Z" fill="url(#pg2)" fill-opacity="0.85"/></g>
<path d="M985.5 43.5 L994 52 L1002.5 43.5" stroke="#27272a" stroke-width="2.8" fill="none" stroke-linecap="round" stroke-linejoin="round"/>
<circle cx="1158.6" cy="46.8" r="11" stroke="#a1a1aa" stroke-width="2.7" fill="none"/><path d="M1166.6 55 L1172 60.4" stroke="#a1a1aa" stroke-width="2.7" stroke-linecap="round"/>
<g transform="translate(2521.632,31.631999999999998) scale(1.364)" stroke="#18181b" stroke-width="2.05" fill="none" stroke-linecap="round" stroke-linejoin="round"><circle cx="12" cy="12" r="10"/><path d="M9.09 9a3 3 0 0 1 5.83 1c0 2-3 3-3 3"/><path d="M12 17h.01"/></g>
<g transform="translate(2580.6,30.6) scale(1.45)" stroke="#18181b" stroke-width="2" fill="none" stroke-linecap="round" stroke-linejoin="round"><circle cx="12" cy="12" r="4.9"/><path d="M12 2v2"/><path d="M12 20v2"/><path d="m4.93 4.93 1.41 1.41"/><path d="m17.66 17.66 1.41 1.41"/><path d="M2 12h2"/><path d="M20 12h2"/><path d="m6.34 17.66-1.41 1.41"/><path d="m19.07 4.93-1.41 1.41"/></g>
<g transform="translate(2641.2,31.200000000000003) scale(1.4)" stroke="#18181b" stroke-width="2" fill="none" stroke-linecap="round" stroke-linejoin="round"><path d="M6 8a6 6 0 0 1 12 0c0 7 3 9 3 9H3s3-2 3-9"/><path d="M10.3 21a1.94 1.94 0 0 0 3.4 0"/></g>
<defs><clipPath id="avc"><circle cx="2742" cy="48" r="32"/></clipPath></defs><g clip-path="url(#avc)" stroke-linejoin="round"><circle cx="2742" cy="48" r="32" fill="#f78ec9"/><path d="M2714 82 Q2718 72 2730 68 L2754 68 Q2766 72 2770 82 Z" fill="#2e3b4e" stroke="#1b1b1b" stroke-width="1"/><path d="M2732 62 L2732 69 Q2742 78 2752 69 L2752 62 Z" fill="#fcd0a4" stroke="#1b1b1b" stroke-width="0.9"/><ellipse cx="2728.5" cy="50" rx="2.6" ry="4.6" fill="#fcd0a4" stroke="#1b1b1b" stroke-width="0.9"/><ellipse cx="2755.5" cy="50" rx="2.6" ry="4.6" fill="#fcd0a4" stroke="#1b1b1b" stroke-width="0.9"/><path d="M2730 33 L2754 33 L2754 58 Q2750 68 2742 68 Q2734 68 2730 58 Z" fill="#fcd0a4" stroke="#1b1b1b" stroke-width="0.9"/><path d="M2727 47 Q2724 30 2736 26.5 Q2744 24 2752 28 Q2759 32 2757 47 L2754 46 Q2754 37 2748 35.5 Q2740 34 2731 36 Q2730 40 2730 47 Z" fill="#4a2e27" stroke="#1b1b1b" stroke-width="0.9"/><path d="M2730 55 Q2731 66 2742 68.5 Q2753 66 2754 55 Q2750 59 2747 55.5 Q2742 54.5 2737 55.5 Q2734 59 2730 55 Z" fill="#6b4133" stroke="#1b1b1b" stroke-width="0.9"/><path d="M2738 58 Q2742 60.5 2746 58" stroke="#ffffff" stroke-width="1.8" fill="none"/><ellipse cx="2736.2" cy="47.2" rx="1.2" ry="0.9" fill="#1b1b1b"/><ellipse cx="2747.6" cy="47.2" rx="1.2" ry="0.9" fill="#1b1b1b"/><path d="M2732.5 43.8 Q2736 42.6 2739 43.8 M2745 43.8 Q2748 42.6 2751.5 43.8" stroke="#1b1b1b" stroke-width="1.3" fill="none"/><path d="M2741 47 L2740 53.5 L2743 54" stroke="#c0684a" stroke-width="0.9" fill="none"/></g>
<g transform="translate(48,128) scale(1.2307692307692308)"><path d="M16.1 44.4 C26 38 30 34 26.3 31 C20 26 16 20 18.3 15.9 C20 9 26 5.2 32.3 5.2 C40 5.2 46 11 45.2 19.1 C44.5 28 40 35 36.6 38.5 C31 43 24 45 16.1 44.4 Z" fill="#2596ab" fill-opacity="0.5" stroke="#8be6ef" stroke-width="1.1"/><path d="M19.5 15.5 C21 9.5 26 6.5 32 6.5" stroke="#ffffff" stroke-opacity="0.6" stroke-width="1.4" fill="none" stroke-linecap="round"/><circle cx="40.5" cy="16.5" r="2.4" fill="#ffffff" fill-opacity="0.3"/></g>
<path d="M50.3 267.4 L66.6 257.6 L77.6 264.6 L77.6 276.4 L61.3 285.7 L50.3 278.7 Z M50.3 267.4 L61.3 273.6 L77.6 264.6 M61.3 273.6 L61.3 285.7" stroke="#52525b" stroke-width="3.0" fill="none" stroke-linejoin="round" stroke-linecap="round"/>
<g transform="translate(48.04,320.04) scale(1.33)" stroke="#52525b" stroke-width="2.25" fill="none" stroke-linecap="round" stroke-linejoin="round"><ellipse cx="12" cy="5" rx="9" ry="3"/><path d="M3 5V19A9 3 0 0 0 21 19V5"/><path d="M3 12A9 3 0 0 0 21 12"/></g>
<path d="M73.40 399.80 L73.40 400.05 L73.40 400.29 L73.40 400.54 L73.41 400.79 L73.43 401.04 L73.50 401.30 L73.64 401.59 L73.91 401.91 L74.33 402.28 L74.87 402.71 L75.39 403.17 L75.77 403.62 L75.96 404.04 L76.02 404.42 L76.00 404.77 L75.91 405.10 L75.80 405.43 L75.66 405.74 L75.51 406.05 L75.34 406.35 L75.17 406.64 L74.98 406.93 L74.77 407.20 L74.55 407.47 L74.30 407.70 L74.01 407.91 L73.65 408.04 L73.19 408.08 L72.62 407.98 L71.95 407.75 L71.31 407.50 L70.78 407.33 L70.37 407.26 L70.05 407.28 L69.79 407.35 L69.56 407.45 L69.34 407.57 L69.13 407.69 L68.91 407.82 L68.70 407.94 L68.49 408.06 L68.27 408.19 L68.06 408.31 L67.85 408.44 L67.64 408.59 L67.45 408.78 L67.27 409.04 L67.13 409.43 L67.02 409.98 L66.91 410.67 L66.77 411.35 L66.57 411.90 L66.31 412.28 L66.01 412.52 L65.69 412.67 L65.36 412.77 L65.03 412.83 L64.69 412.87 L64.34 412.89 L64.00 412.90 L63.66 412.89 L63.31 412.87 L62.97 412.83 L62.64 412.77 L62.31 412.67 L61.99 412.52 L61.69 412.28 L61.43 411.90 L61.23 411.35 L61.09 410.67 L60.98 409.98 L60.87 409.43 L60.73 409.04 L60.55 408.78 L60.36 408.59 L60.15 408.44 L59.94 408.31 L59.73 408.19 L59.51 408.06 L59.30 407.94 L59.09 407.82 L58.87 407.69 L58.66 407.57 L58.44 407.45 L58.21 407.35 L57.95 407.28 L57.63 407.26 L57.22 407.33 L56.69 407.50 L56.05 407.75 L55.38 407.98 L54.81 408.08 L54.35 408.04 L53.99 407.91 L53.70 407.70 L53.45 407.47 L53.23 407.20 L53.02 406.93 L52.83 406.64 L52.66 406.35 L52.49 406.05 L52.34 405.74 L52.20 405.43 L52.09 405.10 L52.00 404.77 L51.98 404.42 L52.04 404.04 L52.23 403.62 L52.61 403.17 L53.13 402.71 L53.67 402.28 L54.09 401.91 L54.36 401.59 L54.50 401.30 L54.57 401.04 L54.59 400.79 L54.60 400.54 L54.60 400.29 L54.60 400.05 L54.60 399.80 L54.60 399.55 L54.60 399.31 L54.60 399.06 L54.59 398.81 L54.57 398.56 L54.50 398.30 L54.36 398.01 L54.09 397.69 L53.67 397.32 L53.13 396.89 L52.61 396.43 L52.23 395.98 L52.04 395.56 L51.98 395.18 L52.00 394.83 L52.09 394.50 L52.20 394.17 L52.34 393.86 L52.49 393.55 L52.66 393.25 L52.83 392.96 L53.02 392.67 L53.23 392.40 L53.45 392.13 L53.70 391.90 L53.99 391.69 L54.35 391.56 L54.81 391.52 L55.38 391.62 L56.05 391.85 L56.69 392.10 L57.22 392.27 L57.63 392.34 L57.95 392.32 L58.21 392.25 L58.44 392.15 L58.66 392.03 L58.87 391.91 L59.09 391.78 L59.30 391.66 L59.51 391.54 L59.73 391.41 L59.94 391.29 L60.15 391.16 L60.36 391.01 L60.55 390.82 L60.73 390.56 L60.87 390.17 L60.98 389.62 L61.09 388.93 L61.23 388.25 L61.43 387.70 L61.69 387.32 L61.99 387.08 L62.31 386.93 L62.64 386.83 L62.97 386.77 L63.31 386.73 L63.66 386.71 L64.00 386.70 L64.34 386.71 L64.69 386.73 L65.03 386.77 L65.36 386.83 L65.69 386.93 L66.01 387.08 L66.31 387.32 L66.57 387.70 L66.77 388.25 L66.91 388.93 L67.02 389.62 L67.13 390.17 L67.27 390.56 L67.45 390.82 L67.64 391.01 L67.85 391.16 L68.06 391.29 L68.27 391.41 L68.49 391.54 L68.70 391.66 L68.91 391.78 L69.13 391.91 L69.34 392.03 L69.56 392.15 L69.79 392.25 L70.05 392.32 L70.37 392.34 L70.78 392.27 L71.31 392.10 L71.95 391.85 L72.62 391.62 L73.19 391.52 L73.65 391.56 L74.01 391.69 L74.30 391.90 L74.55 392.13 L74.77 392.40 L74.98 392.67 L75.17 392.96 L75.34 393.25 L75.51 393.55 L75.66 393.86 L75.80 394.17 L75.91 394.50 L76.00 394.83 L76.02 395.18 L75.96 395.56 L75.77 395.98 L75.39 396.43 L74.87 396.89 L74.33 397.32 L73.91 397.69 L73.64 398.01 L73.50 398.30 L73.43 398.56 L73.41 398.81 L73.40 399.06 L73.40 399.31 L73.40 399.55 Z" stroke="#52525b" stroke-width="3.0" fill="none" stroke-linejoin="round"/><circle cx="64" cy="399.8" r="4.0" stroke="#52525b" stroke-width="3.0" fill="none"/>
<g transform="translate(47.68,543.68) scale(1.36)" stroke="#27272a" stroke-width="2.5" fill="none" stroke-linecap="round" stroke-linejoin="round"><path d="M21 8a2 2 0 0 0-1-1.73l-7-4a2 2 0 0 0-2 0l-7 4A2 2 0 0 0 3 8v8a2 2 0 0 0 1 1.73l7 4a2 2 0 0 0 2 0l7-4A2 2 0 0 0 21 16Z"/><path d="m3.3 7 8.7 5 8.7-5"/><path d="M12 22V12"/></g>
<path d="M403.5 552 L411.8 560 L403.5 568" stroke="#52525b" stroke-width="2.7" fill="none" stroke-linecap="round" stroke-linejoin="round"/>
<g transform="translate(48.04,608.04) scale(1.33)" stroke="#52525b" stroke-width="2.2" fill="none" stroke-linecap="round" stroke-linejoin="round"><path d="m12.83 2.18a2 2 0 0 0-1.66 0L2.6 6.08a1 1 0 0 0 0 1.83l8.58 3.91a2 2 0 0 0 1.66 0l8.58-3.9a1 1 0 0 0 0-1.83Z"/><path d="m22 17.65-9.17 4.16a2 2 0 0 1-1.66 0L2 17.65"/><path d="m22 12.65-9.17 4.16a2 2 0 0 1-1.66 0L2 12.65"/></g>
<circle cx="54.6" cy="688" r="2.1" stroke="#18181b" stroke-width="2.6" fill="none"/><circle cx="63.9" cy="688" r="2.1" stroke="#18181b" stroke-width="2.6" fill="none"/><circle cx="73.3" cy="688" r="2.1" stroke="#18181b" stroke-width="2.6" fill="none"/>
<path d="M403.5 680 L411.8 688 L403.5 696" stroke="#52525b" stroke-width="2.7" fill="none" stroke-linecap="round" stroke-linejoin="round"/>
<g transform="translate(48.0,832.0) scale(1.0)"><path d="M23.2 18.4 L40.8 18.4 L47 27.7 L32 46.8 L17 27.7 Z" fill="#fafafa" stroke="#fafafa" stroke-width="0.8" stroke-linejoin="round"/><path d="M24.8 21.2 L27.9 21.2 L25.8 26.2 L22 26.2 Z M32 21.6 L35.1 26.2 L29.6 26.2 Z M36 21.2 L39.2 21.2 L42.1 26.2 L37.2 26.2 Z M22 29.2 L25.8 29.2 L27.9 36.8 Z M29.2 29.2 L35.1 29.2 L32 39.4 Z M38.1 29.2 L42.1 29.2 L36.4 36.8 Z" fill="#e76e50"/></g>
<path d="M400 860 L407.5 867.5 L415 860" stroke="#52525b" stroke-width="2.7" fill="none" stroke-linecap="round" stroke-linejoin="round"/>
<g transform="translate(64.4,1152.4) scale(1.3)" stroke="#ffffff" stroke-width="2.2" fill="none" stroke-linecap="round" stroke-linejoin="round"><path d="M21.21 15.89A10 10 0 1 1 8 2.83"/><path d="M22 12A10 10 0 0 0 12 2v10z"/></g>
<path d="M403.5 1160 L411.8 1168 L403.5 1176" stroke="#52525b" stroke-width="2.7" fill="none" stroke-linecap="round" stroke-linejoin="round"/>
<g transform="translate(488.0,120.0) scale(1.0)"><path d="M23.2 18.4 L40.8 18.4 L47 27.7 L32 46.8 L17 27.7 Z" fill="#fafafa" stroke="#fafafa" stroke-width="0.8" stroke-linejoin="round"/><path d="M24.8 21.2 L27.9 21.2 L25.8 26.2 L22 26.2 Z M32 21.6 L35.1 26.2 L29.6 26.2 Z M36 21.2 L39.2 21.2 L42.1 26.2 L37.2 26.2 Z M22 29.2 L25.8 29.2 L27.9 36.8 Z M29.2 29.2 L35.1 29.2 L32 39.4 Z M38.1 29.2 L42.1 29.2 L36.4 36.8 Z" fill="#e76e50"/></g>
<path d="M2632 142.5 V162 M2622.3 152.2 H2641.7" stroke="#ffffff" stroke-width="2.8" stroke-linecap="round"/>
<path d="M493.3 251.3 H514.7 M493.3 259.5 H514.7 M493.3 267.7 H514.7" stroke="#a1a1aa" stroke-width="2.7" stroke-linecap="round"/>
<circle cx="727.5" cy="259.5" r="13" stroke="#a1a1aa" stroke-width="2.7" fill="none" stroke-dasharray="6.6 3.6" stroke-dashoffset="3" stroke-linecap="round"/>
<g transform="translate(915.68,243.68) scale(1.36)" stroke="#18181b" stroke-width="2" fill="none" stroke-linecap="round" stroke-linejoin="round"><path d="m12.83 2.18a2 2 0 0 0-1.66 0L2.6 6.08a1 1 0 0 0 0 1.83l8.58 3.91a2 2 0 0 0 1.66 0l8.58-3.9a1 1 0 0 0 0-1.83Z"/><path d="m22 17.65-9.17 4.16a2 2 0 0 1-1.66 0L2 17.65"/><path d="m22 12.65-9.17 4.16a2 2 0 0 1-1.66 0L2 12.65"/></g>
<circle cx="1069.3" cy="260" r="2.8" fill="#18181b"/><circle cx="1078" cy="260" r="2.8" fill="#18181b"/><circle cx="1086.7" cy="260" r="2.8" fill="#18181b"/>
<g transform="translate(1133.68,243.68) scale(1.36)" stroke="#a1a1aa" stroke-width="2" fill="none" stroke-linecap="round" stroke-linejoin="round"><path d="M12 8v8"/><path d="M2.7 10.3a2.41 2.41 0 0 0 0 3.41l7.59 7.59a2.41 2.41 0 0 0 3.41 0l7.59-7.59a2.41 2.41 0 0 0 0-3.41L13.7 2.71a2.41 2.41 0 0 0-3.41 0z"/><path d="M8 12h8"/></g>
<g transform="translate(2676.04,243.54) scale(1.33)" stroke="#18181b" stroke-width="2.3" fill="none" stroke-linecap="round" stroke-linejoin="round"><rect width="18" height="18" x="3" y="3" rx="2"/><path d="M9 3v18"/><path d="M15 3v18"/></g>
<g transform="translate(659.3,355.8) scale(1.35)" stroke="#27272a" stroke-width="2" fill="none" stroke-linecap="round" stroke-linejoin="round"><circle cx="11" cy="11" r="8"/><path d="m21 21-4.3-4.3"/></g>
<g transform="translate(844.66,355.66) scale(1.32)" stroke="#27272a" stroke-width="2" fill="none" stroke-linecap="round" stroke-linejoin="round"><polygon points="22 3 2 3 10 12.46 10 19 14 21 14 12.46 22 3"/></g>
<circle cx="1015.5" cy="371.7" r="2.7" fill="#27272a"/><circle cx="1024.3" cy="371.7" r="2.7" fill="#27272a"/><circle cx="1033.1" cy="371.7" r="2.7" fill="#27272a"/>
<g transform="translate(2348.4,356.4) scale(1.3)" stroke="#27272a" stroke-width="2" fill="none" stroke-linecap="round" stroke-linejoin="round"><path d="M12 8V4H8"/><rect width="16" height="12" x="4" y="8" rx="2"/><path d="M2 14h2"/><path d="M20 14h2"/><path d="M15 13v2"/><path d="M9 13v2"/></g>
<rect x="2598.4" y="360.6" width="23.2" height="23.6" rx="8.5" stroke="#27272a" stroke-width="2.7" fill="none"/>
<path d="M799.5 496.5 L814.5 511.5 M814.5 496.5 L799.5 511.5" stroke="#27272a" stroke-width="2.6" stroke-linecap="round"/>
<path d="M1110.5 496.5 L1125.5 511.5 M1125.5 496.5 L1110.5 511.5" stroke="#27272a" stroke-width="2.6" stroke-linecap="round"/>
<path d="M995 606.7 V625.3 M985.7 616 H1004.3" stroke="#18181b" stroke-width="2.4" stroke-linecap="round"/>
<path d="M1586 606.7 V625.3 M1576.7 616 H1595.3" stroke="#18181b" stroke-width="2.4" stroke-linecap="round"/>
<path d="M2177 606.7 V625.3 M2167.7 616 H2186.3" stroke="#18181b" stroke-width="2.4" stroke-linecap="round"/>
<path d="M2768 606.7 V625.3 M2758.7 616 H2777.3" stroke="#18181b" stroke-width="2.4" stroke-linecap="round"/>
</svg>
</body></html>
